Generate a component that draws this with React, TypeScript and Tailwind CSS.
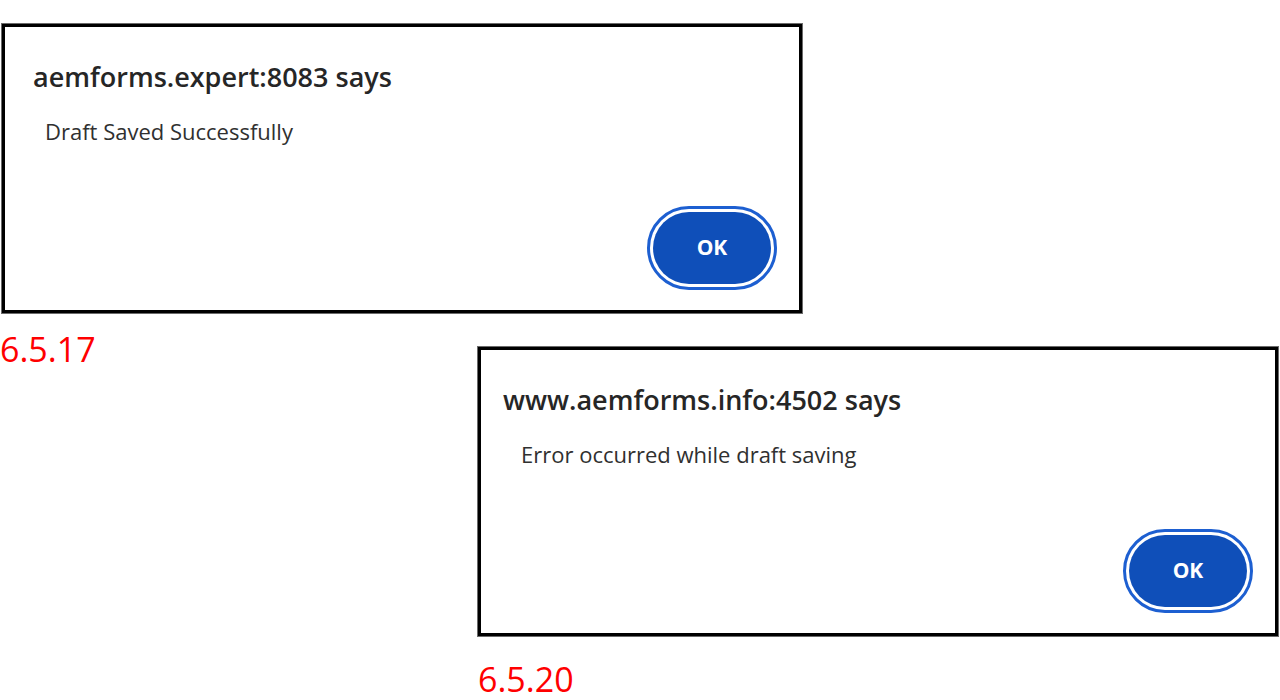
import React from "react";

type AlertProps = {
  origin: string;
  message: string;
  titleIndent: string;
};

function AlertBox({ origin, message, titleIndent }: AlertProps) {
  return (
    <div className="flex h-[289px] w-[800px] flex-col border-[3px] border-black bg-white shadow-[0_0_0_1px_#6b6b6b]">
      <div className={`pt-[26px] ${titleIndent} text-[27px] font-semibold leading-[48px] text-[#262626]`}>
        {origin} says
      </div>
      <div className="pl-[40px] pt-[15px] text-[22px] leading-[30px] text-[#303030]">{message}</div>
      <div className="mt-auto flex justify-end pb-[20px] pr-[22px]">
        <button className="flex h-[84px] w-[130px] items-center justify-center rounded-full border-[3px] border-[#1d5fd1] bg-white p-[3px]">
          <span className="flex h-full w-full items-center justify-center rounded-full bg-[#0f4fb9] text-[21px] font-bold text-white">
            OK
          </span>
        </button>
      </div>
    </div>
  );
}

export default function App() {
  return (
    <div
      className="h-[700px] w-[1280px] overflow-hidden bg-white"
      style={{ fontFamily: '"Open Sans", "Noto Sans", sans-serif' }}
    >
      <div className="ml-[2px] pt-[24px]">
        <AlertBox origin="aemforms.expert:8083" message="Draft Saved Successfully" titleIndent="pl-[28px]" />
      </div>
      <div className="flex items-start">
        <div className="w-[478px] pt-[19px] text-[34px] leading-[34px] text-[#ff0000]">6.5.17</div>
        <div className="flex flex-col pt-[34px]">
          <AlertBox origin="www.aemforms.info:4502" message="Error occurred while draft saving" titleIndent="pl-[22px]" />
          <div className="pt-[26px] text-[34px] leading-[34px] text-[#ff0000]">6.5.20</div>
        </div>
      </div>
    </div>
  );
}
